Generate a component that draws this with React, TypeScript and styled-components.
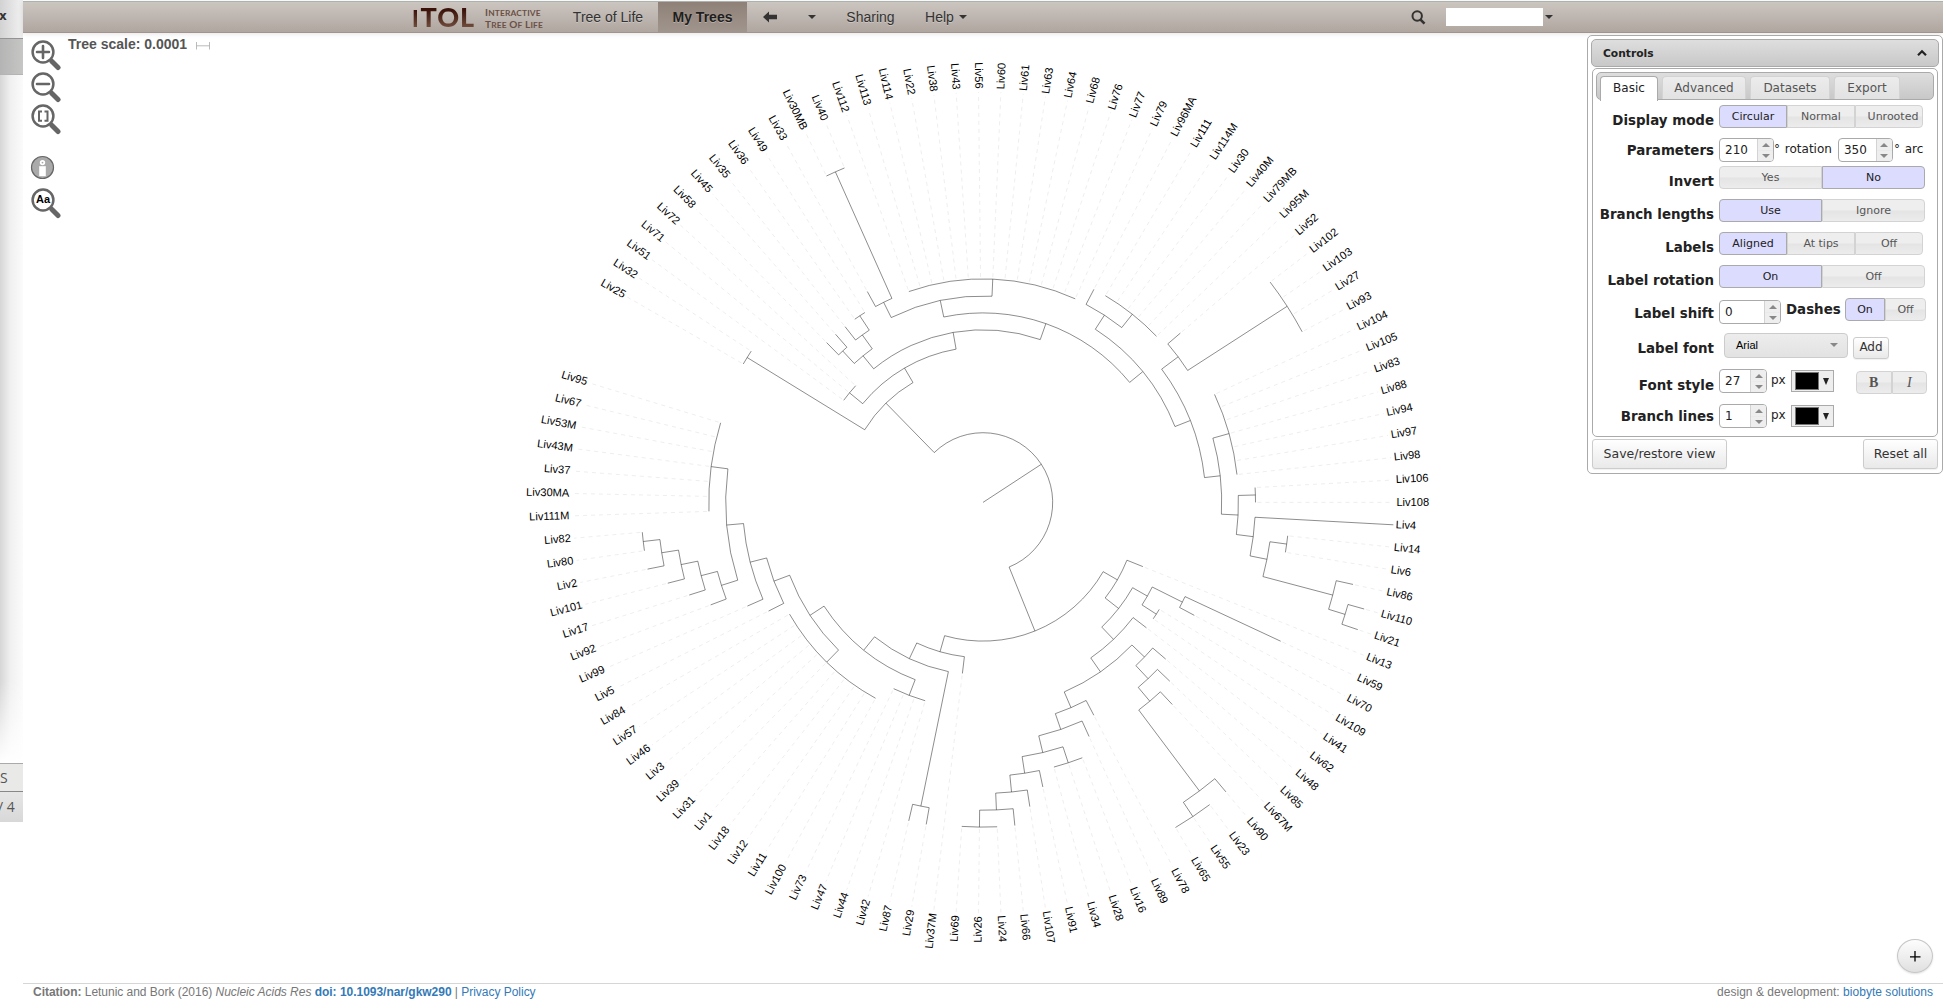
import React from "react";
import styled, { createGlobalStyle, css } from "styled-components";

const Global = createGlobalStyle`
  * { box-sizing: border-box; }
  html, body { margin: 0; padding: 0; background: #fff; }
  body { width: 1943px; height: 1003px; overflow: hidden; font-family: "Liberation Sans", Arial, sans-serif; }
`;

const sans = `"Liberation Sans", Arial, Helvetica, sans-serif`;
const verdana = `"DejaVu Sans", Verdana, sans-serif`;

/* ------------------------------------------------------------------ */
/* Tree data                                                           */
/* ------------------------------------------------------------------ */

type Leaf = { r?: number };
type Clade = { arc: number; kids: TreeNode[] };
type Poly = { arc: number; tips: number };
type TreeNode = Leaf | Clade | Poly;

const leaf = (r?: number): Leaf => ({ r });
const poly = (arc: number, tips: number): Poly => ({ arc, tips });
const clade = (arc: number, ...kids: TreeNode[]): Clade => ({ arc, kids });

const names = (
  "25 32 51 71 72 58 45 35 36 49 33 30MB 40 112 113 114 22 38 43 56 60 61 63 64 68 76 77 79 96MA 111 114M 30 40M 79MB " +
  "95M 52 102 103 27 93 104 105 83 88 94 97 98 106 108 4 14 6 86 110 21 13 59 70 109 41 62 48 85 67M 90 23 55 65 78 89 " +
  "16 28 34 91 107 66 24 26 69 37M 29 87 42 44 47 73 100 11 12 18 1 31 39 3 46 57 84 5 99 92 17 101 2 80 82 111M 30MA " +
  "37 43M 53M 67 95"
).split(" ").map((n) => "Liv" + n);

const upper = clade(
  138.8,
  poly(276.8, 2),
  clade(
    155.6,
    poly(172.7, 3),
    clade(
      172.6,
      clade(
        189.4,
        clade(206.4, leaf(223.6), leaf(223.6)),
        clade(206.4, leaf(223.4), poly(223.6, 2))
      ),
      clade(
        189.5,
        clade(206.4, clade(223.4, leaf(240.5), poly(362, 2)), poly(223.5, 15)),
        clade(
          206.4,
          clade(223.2, leaf(240.2), poly(240.2, 6)),
          clade(
            222.9,
            clade(243.5, leaf(260), poly(361.9, 4)),
            clade(
              238.7,
              poly(255.5, 7),
              clade(
                255.4,
                poly(272.5, 2),
                clade(
                  272.4,
                  leaf(411),
                  clade(
                    289.6,
                    poly(306.5, 2),
                    clade(361.8, leaf(379), clade(379, leaf(395.8), leaf(395.8)))
                  )
                )
              )
            )
          )
        )
      )
    )
  )
);

const rightLower = clade(
  155.1,
  leaf(172.3),
  clade(
    172.2,
    clade(189.2, clade(222.9, leaf(328.4), leaf(239.6)), poly(206.2, 2)),
    clade(
      189.2,
      leaf(206),
      clade(
        206.2,
        clade(
          223.6,
          leaf(240.7),
          clade(
            241.5,
            leaf(258.6),
            clade(259.5, leaf(276.9), clade(360.7, leaf(377.9), poly(377.8, 3)))
          )
        ),
        clade(
          223.3,
          leaf(240),
          clade(
            240,
            leaf(257),
            clade(
              257.2,
              poly(274, 3),
              clade(
                274,
                leaf(290.8),
                clade(291, leaf(307.8), clade(307.8, leaf(324.7), poly(324.7, 3)))
              )
            )
          )
        )
      )
    )
  )
);

const leftLower = clade(
  155.4,
  leaf(172.3),
  clade(
    172.7,
    clade(310, leaf(327), leaf(327)),
    clade(
      189.8,
      poly(206.6, 4),
      clade(
        206.6,
        poly(223.4, 11),
        clade(
          223.4,
          leaf(240.4),
          clade(
            240.4,
            leaf(257.4),
            clade(
              257.3,
              clade(
                274.4,
                leaf(291),
                clade(
                  291.2,
                  leaf(308),
                  clade(308.2, leaf(325.4), clade(325.2, leaf(342), poly(342, 2)))
                )
              ),
              poly(274.2, 7)
            )
          )
        )
      )
    )
  )
);

const tree = clade(69.7, upper, clade(138.7, rightLower, leftLower));

const CX = 983.0;
const CY = 502.4;
const STEP = 350 / names.length;
const LABEL_R = 413.4;

const point = (r: number, idx: number) => {
  const a = ((210 + idx * STEP) * Math.PI) / 180;
  return [CX + r * Math.cos(a), CY + r * Math.sin(a)].map((v) => v.toFixed(2)).join(" ");
};

function layoutTree() {
  const branches: string[] = [];
  const dashes: string[] = [];
  let next = 0;

  const arc = (r: number, a: number, b: number) => {
    const large = (b - a) * STEP > 180 ? 1 : 0;
    branches.push(`M${point(r, a)}A${r} ${r} 0 ${large} 1 ${point(r, b)}`);
  };
  const spoke = (r1: number, r2: number, i: number) =>
    branches.push(`M${point(r1, i)}L${point(r2, i)}`);
  const dash = (r: number, i: number) => {
    if (r < 405) dashes.push(`M${point(r + 2, i)}L${point(410.5, i)}`);
  };

  const walk = (node: TreeNode, from: number): number => {
    let idx: number;
    if ("tips" in node) {
      const first = next;
      next += node.tips;
      for (let i = first; i < next; i++) dash(node.arc, i);
      arc(node.arc, first, next - 1);
      idx = (first + next - 1) / 2;
      spoke(from, node.arc, idx);
    } else if ("kids" in node) {
      const at = node.kids.map((k) => walk(k, node.arc));
      arc(node.arc, at[0], at[at.length - 1]);
      idx = (at[0] + at[at.length - 1]) / 2;
      spoke(from, node.arc, idx);
    } else {
      idx = next++;
      spoke(from, node.r!, idx);
      dash(node.r!, idx);
    }
    return idx;
  };
  walk(tree, 0);
  return { branches: branches.join(""), dashes: dashes.join("") };
}

const paths = layoutTree();

/* ------------------------------------------------------------------ */
/* Layout                                                              */
/* ------------------------------------------------------------------ */

const Screen = styled.div`
  display: flex;
  width: 1943px;
  height: 1003px;
  background: #fff;
  overflow: hidden;
`;

const Behind = styled.aside`
  width: 23px;
  flex: none;
  height: 822px;
  display: flex;
  flex-direction: column;
  overflow: hidden;
  font-family: "Open Sans", ${sans};
  color: #555;
`;
const BehindTitle = styled.div`
  height: 38px;
  background: linear-gradient(90deg, #d2d2d2, #ececec 80%);
  font: bold 12px/32px ${verdana};
  color: #333;
  text-indent: -1px;
`;
const BehindTool = styled.div`
  height: 37px;
  border-top: 1px solid #939393;
  border-bottom: 1px solid #b4b4b4;
  background: linear-gradient(90deg, #b4b4b4, #c6c6c5);
`;
const BehindBody = styled.div`
  flex: 1;
  background: linear-gradient(180deg, rgba(255, 255, 255, 0) 88%, #fff),
    linear-gradient(90deg, #d6d6d6, #f0f0f0 45%, #fbfbfb);
`;
const BehindTab = styled.div`
  height: 28px;
  border-top: 1px solid #aaa;
  background: #e9e9e8;
  font-size: 14px;
  line-height: 28px;
`;
const BehindStatus = styled.div`
  height: 31px;
  border-top: 1px solid #888;
  background: linear-gradient(#e6e6e6, #d8d8d8);
  font-size: 14px;
  line-height: 29px;
  white-space: nowrap;
  text-indent: -2px;
`;

const Page = styled.div`
  position: relative;
  flex: 1;
  display: flex;
  flex-direction: column;
  min-width: 0;
`;

const NavBar = styled.nav`
  display: flex;
  height: 32px;
  margin-top: 1px;
  flex: none;
  padding-left: 390px;
  border-top: 1px solid #aeb2ae;
  border-bottom: 1px solid #a2938e;
  background: linear-gradient(#cbc5c0, #b0a6a0);
  box-shadow: 0 1px 5px rgba(0, 0, 0, 0.1);
  color: #333;
  font: 14px/29px ${sans};
  text-shadow: 0 1px 0 rgba(255, 255, 255, 0.3);
`;
const Logo = styled.div`
  display: flex;
  width: 145px;
  align-items: baseline;
  font: 900 27px/29px Lato, sans-serif;
  color: #45241a;
  text-shadow: none;
`;
const LogoWord = styled.span`
  width: 72px;
  margin-left: -1px;
  margin-right: 1px;
  letter-spacing: 0.9px;
  background: linear-gradient(#3a120a 25%, #74503f 85%);
  -webkit-background-clip: text;
  color: transparent;
  small { font-size: 22px; margin-right: 1px; }
`;
const LogoTag = styled.span`
  align-self: flex-start;
  padding-top: 5px;
  white-space: nowrap;
  font: bold 10px/11px Lato, sans-serif;
  color: #6b5045;
  letter-spacing: 0.16px;
  small { font-size: 8.4px; }
`;
const NavItem = styled.a<{ $w: number; $active?: boolean }>`
  display: flex;
  align-items: center;
  justify-content: center;
  gap: 5px;
  width: ${(p) => p.$w}px;
  ${(p) => p.$active && css`
    background: linear-gradient(#8f8178, #a0958d);
    font-weight: bold;
    color: #1e1e1e;
  `}
`;
const Caret = styled.i`
  width: 0;
  height: 0;
  border: 4px solid transparent;
  border-top-color: #333;
  border-bottom: 0;
`;
const NavSearch = styled.div`
  display: flex;
  align-items: center;
  margin-left: auto;
  margin-right: 390px;
  gap: 2px;
  svg { margin-right: 18px; }
`;
const SearchBox = styled.div`
  width: 97px;
  height: 18px;
  background: #fff;
`;

const Stage = styled.main`
  position: relative;
  flex: 1;
`;
const TreeCanvas = styled.svg`
  position: absolute;
  left: 0;
  top: 0;
  font-family: ${sans};
`;
const ToolRail = styled.div`
  position: relative;
  display: flex;
  flex-direction: column;
  width: 40px;
  padding: 6px 0 0 7px;
  svg { display: block; }
`;
const Gap = styled.div`
  height: 20px;
`;

const RoundButton = styled.button`
  position: absolute;
  right: 10px;
  bottom: 10px;
  width: 36px;
  height: 34px;
  padding: 0;
  border: 1px solid #c6c6c6;
  border-radius: 50%;
  background: linear-gradient(#fdfdfd, #e0e0e0);
  box-shadow: 0 1px 2px rgba(0, 0, 0, 0.12);
  display: flex;
  align-items: center;
  justify-content: center;
`;

const Footer = styled.footer`
  display: flex;
  justify-content: space-between;
  flex: none;
  height: 20px;
  padding: 0 10px;
  border-top: 1px solid #d6d6d6;
  color: #777;
  font: 12px/17px ${sans};
  a { color: #337ab7; }
`;
const Citation = styled.span`
  letter-spacing: -0.025px;
`;
const Credit = styled.span`
  letter-spacing: 0.03px;
`;

/* ------------------------------------------------------------------ */
/* Controls panel                                                      */
/* ------------------------------------------------------------------ */

const Panel = styled.section`
  position: absolute;
  left: 1564px;
  top: 35px;
  width: 356px;
  height: 439px;
  padding: 3px;
  border: 1px solid #aaa;
  border-radius: 5px;
  background: #fff;
  font-family: ${verdana};
  color: #222;
`;
const PanelHead = styled.header`
  display: flex;
  align-items: center;
  justify-content: space-between;
  height: 28px;
  padding: 0 11px;
  border: 1px solid #aaa;
  border-radius: 5px;
  background: linear-gradient(#dedede, #c8c8c8);
  font-size: 10.7px;
  font-weight: bold;
`;
const PanelBody = styled.div`
  height: 369px;
  margin: 1px 1px 0;
  padding: 3px;
  border: 1px solid #aaa;
  border-radius: 5px;
`;
const TabBar = styled.div`
  display: flex;
  gap: 4px;
  height: 28px;
  padding: 3px 3px 0;
  border: 1px solid #aaa;
  border-radius: 5px;
  background: linear-gradient(#dedede, #c8c8c8);
`;
const Tab = styled.div<{ $w: number; $on?: boolean }>`
  width: ${(p) => p.$w}px;
  height: ${(p) => (p.$on ? 25 : 23)}px;
  border: 1px solid ${(p) => (p.$on ? "#aaa" : "#d3d3d3")};
  border-bottom: 0;
  border-radius: 4px 4px 0 0;
  background: ${(p) => (p.$on ? "#fff" : "linear-gradient(#ececec, #e2e2e2)")};
  color: ${(p) => (p.$on ? "#212121" : "#555")};
  font-size: 12px;
  line-height: 22px;
  text-align: center;
`;
const Row = styled.div<{ $h: number }>`
  display: flex;
  height: ${(p) => p.$h}px;
`;
const RowLabel = styled.div<{ $drop?: number }>`
  width: 118px;
  margin-right: 5px;
  padding-top: ${(p) => p.$drop ?? 8}px;
  flex: none;
  text-align: right;
  white-space: nowrap;
  font-size: 13.4px;
  line-height: 16px;
  font-weight: bold;
`;
const Rows = styled.div`
  padding-top: 5px;
`;
const Group = styled.div`
  display: flex;
  height: 23px;
`;
const Seg = styled.div<{ $w: number; $on?: boolean; $nudge?: number }>`
  width: ${(p) => p.$w}px;
  padding-left: ${(p) => p.$nudge ?? 0}px;
  border: 1px solid ${(p) => (p.$on ? "#aaa" : "#d3d3d3")};
  background: ${(p) => (p.$on ? "#dcdcff" : "linear-gradient(#eee 49%, #e4e4e4 51%, #ececec)")};
  color: ${(p) => (p.$on ? "#212121" : "#555")};
  font-size: 11px;
  line-height: 22px;
  text-align: center;
  &:first-child { border-radius: 4px 0 0 4px; }
  &:last-child { border-radius: 0 4px 4px 0; }
`;
const Serif = styled.span<{ $italic?: boolean }>`
  font: ${(p) => (p.$italic ? "italic" : "bold")} 14px/21px "Liberation Serif", serif;
`;
const Spinner = styled.div<{ $w: number }>`
  display: flex;
  width: ${(p) => p.$w}px;
  height: 24px;
  border: 1px solid #aaa;
  border-radius: 4px;
  overflow: hidden;
  padding-left: 5px;
  font-size: 12px;
  line-height: 22px;
`;
const SpinArrows = styled.div`
  display: flex;
  flex-direction: column;
  align-items: center;
  justify-content: center;
  gap: 7px;
  width: 16px;
  margin-left: auto;
  border-left: 1px solid #d3d3d3;
  background: linear-gradient(#eee 48%, #ddd 50%, #eee 53%);
  &::before, &::after {
    content: "";
    border: 4px solid transparent;
    border-top: 0;
    border-bottom-color: #888;
  }
  &::after {
    border-top: 4px solid #888;
    border-bottom: 0;
  }
`;
const Txt = styled.span<{ $ml?: number; $mr?: number; $gap?: number }>`
  margin-left: ${(p) => p.$ml ?? 0}px;
  margin-right: ${(p) => p.$mr ?? 0}px;
  word-spacing: ${(p) => p.$gap ?? 0}px;
  font-size: 12px;
  line-height: 22px;
  white-space: nowrap;
`;
const Strong = styled.span`
  width: 59px;
  margin-left: 5px;
  font-size: 13.4px;
  font-weight: bold;
  line-height: 24px;
`;
const Select = styled.div`
  display: flex;
  align-items: center;
  justify-content: space-between;
  width: 124px;
  height: 25px;
  margin-left: 5px;
  padding: 0 9px 1px 11px;
  border: 1px solid #ccc;
  border-radius: 4px;
  background: linear-gradient(#ededed, #e2e2e2);
  color: #000;
  font: 11px ${sans};
  i { border-top-color: #888; }
`;
const Button = styled.div<{ $w: number; $h: number }>`
  width: ${(p) => p.$w}px;
  height: ${(p) => p.$h}px;
  border: 1px solid #ccc;
  border-radius: 3px;
  background: linear-gradient(#fff, #e9e9e9);
  box-shadow: 0 1px 1px rgba(0, 0, 0, 0.06);
  color: #333;
  font-size: ${(p) => (p.$h > 25 ? 12.5 : 12)}px;
  line-height: ${(p) => p.$h - 3}px;
  text-align: center;
`;
const AddButton = styled(Button)`
  margin: 4px 0 0 5px;
`;
const Swatch = styled.div`
  display: flex;
  align-items: center;
  gap: 4px;
  width: 43px;
  height: 22px;
  margin-top: 1px;
  padding: 0 4px 0 3px;
  border: 1px solid #aaa;
  background: #eee;
  &::before {
    content: "";
    width: 25px;
    height: 16px;
    border: 1px solid #777;
    background: #000;
  }
  &::after {
    content: "";
    border: 3.5px solid transparent;
    border-top: 7px solid #222;
    border-bottom: 0;
  }
`;
const Shift = styled.div<{ $x?: number; $y?: number }>`
  margin: ${(p) => p.$y ?? 0}px 0 0 ${(p) => p.$x ?? 0}px;
`;
const PanelFoot = styled.div`
  display: flex;
  justify-content: space-between;
  padding: 2px 1px 0;
`;

/* ------------------------------------------------------------------ */

type Choice = [label: string, width: number, on?: boolean, nudge?: number];

const Choices = ({ items }: { items: Choice[] }) => (
  <Group>
    {items.map(([label, w, on, nudge]) => (
      <Seg key={label} $w={w} $on={on} $nudge={nudge}>{label}</Seg>
    ))}
  </Group>
);

const Spin = ({ value, w }: { value: string; w: number }) => (
  <Spinner $w={w}>
    {value}
    <SpinArrows />
  </Spinner>
);

const Magnifier = ({ children }: { children: React.ReactNode }) => (
  <svg width="32" height="32" viewBox="0 0 32 32" fill="none" stroke="#666">
    <path d="M22 22.5l6 6" strokeWidth="5" strokeLinecap="round" />
    <circle cx="13" cy="13" r="10.4" strokeWidth="2.5" fill="#fff" />
    {children}
  </svg>
);

const TreeView = () => (
  <TreeCanvas width="1920" height="950" viewBox="23 33 1920 950">
    <path d={paths.dashes} fill="none" stroke="#d6d6d6" strokeWidth="0.42" strokeDasharray="4 4" />
    <path d={paths.branches} fill="none" stroke="#000" strokeWidth="0.45" />
    {names.map((name, i) => {
      const a = 210 + i * STEP;
      const flip = a < 270 || a > 450;
      return (
        <text
          key={name}
          fontSize="11.1"
          fill="#000"
          dy="0.29em"
          textAnchor={flip ? "end" : "start"}
          transform={`translate(${point(flip ? LABEL_R + 0.4 : LABEL_R, i)}) rotate(${flip ? a - 180 : a})`}
        >
          {name}
        </text>
      );
    })}
    <text x="68" y="49" fontSize="14" fontWeight="bold" fill="#555">Tree scale: 0.0001</text>
    <path d="M196.5 42v7.5M209.5 42v7.5M196.5 45.8h13" stroke="#aaa" strokeWidth="0.8" fill="none" />
  </TreeCanvas>
);

export default function App() {
  return (
    <Screen>
      <Global />
      <Behind>
        <BehindTitle>x</BehindTitle>
        <BehindTool />
        <BehindBody />
        <BehindTab>S</BehindTab>
        <BehindStatus>/ 4</BehindStatus>
      </Behind>
      <Page>
        <NavBar>
          <Logo>
            <LogoWord><small>I</small>TOL</LogoWord>
            <LogoTag>
              I<small>NTERACTIVE</small>
              <br />
              T<small>REE</small> O<small>F</small> L<small>IFE</small>
            </LogoTag>
          </Logo>
          <NavItem $w={100}>Tree of Life</NavItem>
          <NavItem $w={89} $active>My Trees</NavItem>
          <NavItem $w={45}>
            <svg width="14" height="12" viewBox="0 0 14 12">
              <path d="M0 6l6-5.5v3.3h8v4.4H6v3.3z" fill="#333" />
            </svg>
          </NavItem>
          <NavItem $w={39}><Caret /></NavItem>
          <NavItem $w={79}>Sharing</NavItem>
          <NavItem $w={72}>Help<Caret /></NavItem>
          <NavSearch>
            <svg width="15" height="15" viewBox="0 0 15 15" fill="none" stroke="#333">
              <circle cx="6.2" cy="6" r="4.7" strokeWidth="2" />
              <path d="M9.5 9.7l4 4" strokeWidth="2.6" />
            </svg>
            <SearchBox />
            <Caret />
          </NavSearch>
        </NavBar>

        <Stage>
          <TreeView />
          <ToolRail>
            <Magnifier><path d="M13 7v12M7 13h12" strokeWidth="2.6" strokeLinecap="round" /></Magnifier>
            <Magnifier><path d="M7 13h12" strokeWidth="2.6" strokeLinecap="round" /></Magnifier>
            <Magnifier><path d="M12 8.4H9v9.4h3M14.5 8.4h3v9.4h-3" strokeWidth="2" /></Magnifier>
            <Gap />
            <svg width="32" height="32" viewBox="0 0 32 32">
              <circle cx="12.5" cy="12.5" r="11" fill="#aaa" stroke="#666" strokeWidth="1.2" />
              <circle cx="12.5" cy="7.6" r="1.8" fill="#aaa" stroke="#fff" strokeWidth="1.8" />
              <rect x="9.2" y="11.2" width="6.6" height="10" fill="#fff" />
            </svg>
            <Magnifier>
              <text x="13" y="16.3" fontSize="11" fontWeight="bold" textAnchor="middle" fill="#000" stroke="none">Aa</text>
            </Magnifier>
          </ToolRail>
          <RoundButton>
            <svg width="12" height="12" viewBox="0 0 12 12">
              <path d="M6 1v10.5M1 6.8h10.5" stroke="#000" strokeWidth="1.3" />
            </svg>
          </RoundButton>
        </Stage>

        <Footer>
          <Citation>
            <b>Citation:</b> Letunic and Bork (2016) <i>Nucleic Acids Res</i> <a><b>doi: 10.1093/nar/gkw290</b></a> |{" "}
            <a>Privacy Policy</a>
          </Citation>
          <Credit>design &amp; development: <a>biobyte solutions</a></Credit>
        </Footer>

        <Panel>
          <PanelHead>
            Controls
            <svg width="10" height="8" viewBox="0 0 10 8" fill="none" stroke="#222">
              <path d="M1 6.3L5 2.3l4 4" strokeWidth="2.2" />
            </svg>
          </PanelHead>
          <PanelBody>
            <TabBar>
              <Tab $w={58} $on>Basic</Tab>
              <Tab $w={84}>Advanced</Tab>
              <Tab $w={80}>Datasets</Tab>
              <Tab $w={66}>Export</Tab>
            </TabBar>
            <Rows>
              <Row $h={33}>
                <RowLabel>Display mode</RowLabel>
                <Choices items={[["Circular", 68, true], ["Normal", 68], ["Unrooted", 68, false, 8]]} />
              </Row>
              <Row $h={28}>
                <RowLabel $drop={5}>Parameters</RowLabel>
                <Spin value="210" w={55} />
                <Txt $mr={6} $gap={1}>° rotation</Txt>
                <Spin value="350" w={55} />
                <Txt $gap={1} $ml={1}>° arc</Txt>
              </Row>
              <Row $h={33}>
                <RowLabel>Invert</RowLabel>
                <Choices items={[["Yes", 103], ["No", 103, true]]} />
              </Row>
              <Row $h={33}>
                <RowLabel>Branch lengths</RowLabel>
                <Choices items={[["Use", 103, true], ["Ignore", 103]]} />
              </Row>
              <Row $h={33}>
                <RowLabel>Labels</RowLabel>
                <Choices items={[["Aligned", 68, true], ["At tips", 68], ["Off", 68]]} />
              </Row>
              <Row $h={33}>
                <RowLabel>Label rotation</RowLabel>
                <Choices items={[["On", 103, true], ["Off", 103]]} />
              </Row>
              <Row $h={35}>
                <RowLabel>Label shift</RowLabel>
                <Shift $y={2}><Spin value="0" w={62} /></Shift>
                <Strong>Dashes</Strong>
                <Choices items={[["On", 40, true], ["Off", 41]]} />
              </Row>
              <Row $h={36}>
                <RowLabel>Label font</RowLabel>
                <Select>Arial<Caret /></Select>
                <AddButton $w={36} $h={22}>Add</AddButton>
              </Row>
              <Row $h={35}>
                <RowLabel $drop={9}>Font style</RowLabel>
                <Spin value="27" w={48} />
                <Txt $ml={4} $mr={5}>px</Txt>
                <Swatch />
                <Shift $x={22} $y={2}>
                  <Group>
                    <Seg $w={36}><Serif>B</Serif></Seg>
                    <Seg $w={35}><Serif $italic>I</Serif></Seg>
                  </Group>
                </Shift>
              </Row>
              <Row $h={30}>
                <RowLabel $drop={5}>Branch lines</RowLabel>
                <Spin value="1" w={48} />
                <Txt $ml={4} $mr={5}>px</Txt>
                <Swatch />
              </Row>
            </Rows>
          </PanelBody>
          <PanelFoot>
            <Button $w={135} $h={30}>Save/restore view</Button>
            <Button $w={75} $h={30}>Reset all</Button>
          </PanelFoot>
        </Panel>
      </Page>
    </Screen>
  );
}
